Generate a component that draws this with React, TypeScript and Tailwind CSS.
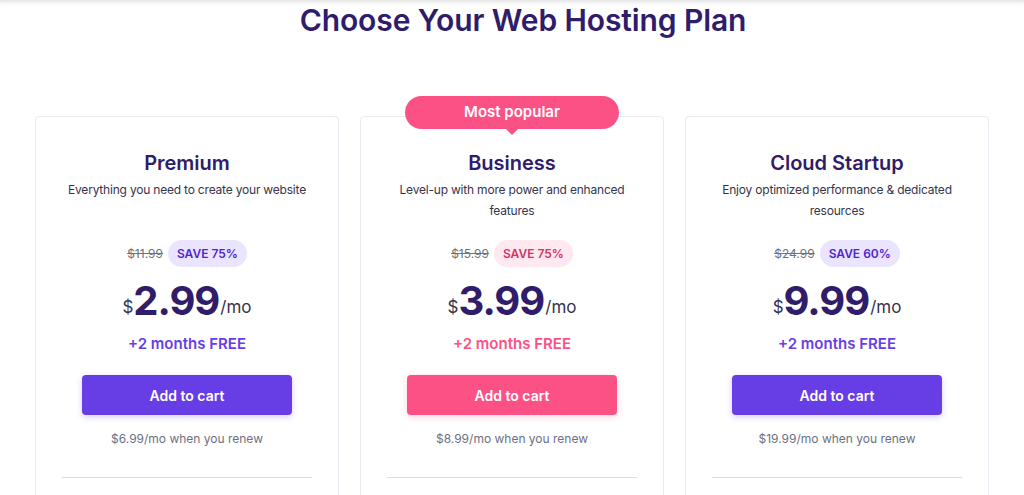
import React from "react";

type Plan = {
  name: string;
  desc: string;
  oldPrice: string;
  save: string;
  price: string;
  renew: string;
  popular?: boolean;
};

const plans: Plan[] = [
  {
    name: "Premium",
    desc: "Everything you need to create your website",
    oldPrice: "$11.99",
    save: "SAVE 75%",
    price: "2.99",
    renew: "$6.99/mo when you renew",
  },
  {
    name: "Business",
    desc: "Level-up with more power and enhanced features",
    oldPrice: "$15.99",
    save: "SAVE 75%",
    price: "3.99",
    renew: "$8.99/mo when you renew",
    popular: true,
  },
  {
    name: "Cloud Startup",
    desc: "Enjoy optimized performance & dedicated resources",
    oldPrice: "$24.99",
    save: "SAVE 60%",
    price: "9.99",
    renew: "$19.99/mo when you renew",
  },
];

const PlanCard = ({ plan }: { plan: Plan }) => {
  const pink = plan.popular;
  return (
    <div className="relative flex flex-col items-center rounded-[4px] border border-[#e9ebf2] bg-white px-[26px] pt-8 pb-6">
      {/* Most popular ribbon */}
      {pink && (
        <div className="absolute -top-[21px] left-1/2 -translate-x-1/2">
          <div className="flex h-[33px] w-[214px] items-center justify-center rounded-full bg-[#fc5185] text-[15px] font-semibold text-white">
            Most popular
          </div>
          <div className="mx-auto h-0 w-0 border-x-[6px] border-t-[6px] border-x-transparent border-t-[#fc5185]" />
        </div>
      )}

      <h3 className="text-[20px] leading-7 font-semibold text-[#2f1c6a]">{plan.name}</h3>
      <p className="mt-[2px] h-[42px] max-w-[240px] text-center text-[12px] leading-[21px] tracking-[-0.2px] text-[#36344d]">
        {plan.desc}
      </p>

      <div className="mt-[19px] flex items-center gap-[5px]">
        <span className="text-[12px] text-[#6d7081] line-through">{plan.oldPrice}</span>
        <span
          className={
            pink
              ? "flex h-[27px] items-center rounded-full bg-[#ffe8ef] px-[9px] text-[12px] font-semibold text-[#d63163]"
              : "flex h-[27px] items-center rounded-full bg-[#ebe4ff] px-[9px] text-[12px] font-semibold text-[#5025d1]"
          }
        >
          {plan.save}
        </span>
      </div>

      <div className="mt-[10px] flex h-[44px] items-end text-[#2f1c6a]">
        <span className="mb-[5px] text-[17px] leading-none text-[#36344d]">$</span>
        <span className="text-[40px] leading-none font-bold tracking-[-1px]">{plan.price}</span>
        <span className="mb-[5px] ml-[1px] text-[17px] leading-none text-[#36344d]">/mo</span>
      </div>

      <p
        className={
          pink
            ? "mt-[11px] text-[15px] leading-6 font-semibold text-[#fc5185]"
            : "mt-[11px] text-[15px] leading-6 font-semibold text-[#673de6]"
        }
      >
        +2 months FREE
      </p>

      <button
        className={
          pink
            ? "mt-[19px] h-[40px] w-[210px] rounded-[4px] bg-[#fc5185] text-[14px] font-semibold text-white shadow-[0_2px_6px_rgba(252,81,133,0.25)]"
            : "mt-[19px] h-[40px] w-[210px] rounded-[4px] bg-[#673de6] text-[14px] font-semibold text-white shadow-[0_2px_6px_rgba(103,61,230,0.25)]"
        }
      >
        Add to cart
      </button>

      <p className="mt-[16px] text-[12px] leading-4 text-[#6d7081]">{plan.renew}</p>

      <div className="mt-[30px] h-px w-full bg-[#dadcf3]" />
    </div>
  );
};

export default function App() {
  return (
    <div
      className="h-[495px] overflow-hidden bg-white shadow-[inset_0_6px_5px_-4px_rgba(0,0,0,0.12)]"
      style={{ fontFamily: "Inter, 'Noto Sans', sans-serif" }}
    >
      <h1 className="pt-[2px] pl-[22px] text-center text-[30px] leading-9 font-semibold tracking-[-0.1px] text-[#2f1c6a]">
        Choose Your Web Hosting Plan
      </h1>
      <div className="mx-auto mt-[78px] grid w-[954px] grid-cols-3 gap-[21px]">
        {plans.map((p) => (
          <PlanCard key={p.name} plan={p} />
        ))}
      </div>
    </div>
  );
}
